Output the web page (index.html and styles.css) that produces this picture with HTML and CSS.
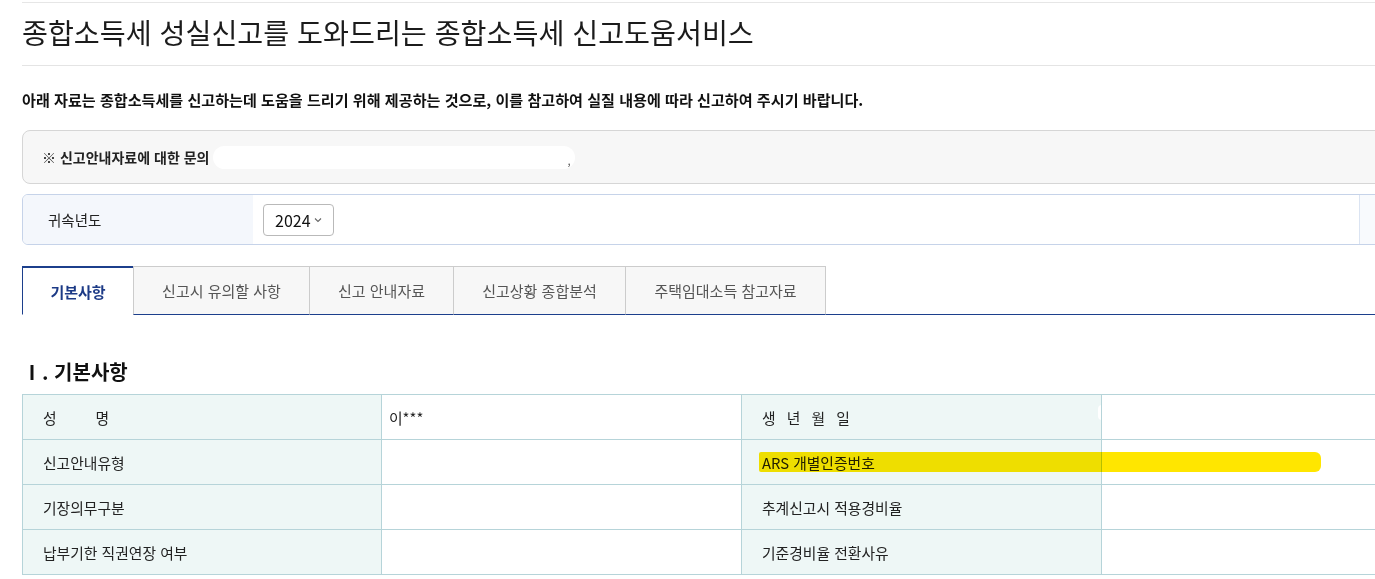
FILE: index.html
```html
<!DOCTYPE html>
<html lang="ko">
<head>
  <meta charset="UTF-8" />
  <title>종합소득세 신고도움서비스</title>
  <link rel="stylesheet" href="styles.css">
</head>
<body>
  <div class="page">
    <div class="top-line"></div>
    <h1 class="title">종합소득세 성실신고를 도와드리는 종합소득세 신고도움서비스</h1>
    <p class="notice">아래 자료는 종합소득세를 신고하는데 도움을 드리기 위해 제공하는 것으로, 이를 참고하여 실질 내용에 따라 신고하여 주시기 바랍니다.</p>

    <div class="info-box">
      <span>※ 신고안내자료에 대한 문의</span>
      <span class="blank"></span>
      <span class="comma">,</span>
    </div>

    <div class="year-box">
      <div class="year-label">귀속년도</div>
      <div class="year-value">
        <div class="select">
          <span>2024</span>
          <svg width="8" height="6" viewBox="0 0 8 6"><path d="M1 1.5 L4 4.5 L7 1.5" fill="none" stroke="#666" stroke-width="1.1"/></svg>
        </div>
      </div>
      <div class="year-rest"></div>
    </div>

    <div class="tabs">
      <div class="tab active">기본사항</div>
      <div class="tab w2">신고시 유의할 사항</div>
      <div class="tab w3">신고 안내자료</div>
      <div class="tab w4">신고상황 종합분석</div>
      <div class="tab w5">주택임대소득 참고자료</div>
      <div class="tab-fill"></div>
    </div>

    <h2 class="section-title">Ⅰ. 기본사항</h2>

    <table class="info-table">
      <colgroup>
        <col class="c1"><col class="c2"><col class="c3"><col>
      </colgroup>
      <tr>
        <th><span class="spread"><span>성</span><span>명</span></span></th>
        <td class="name">이***</td>
        <th class="wide">생 년 월 일</th>
        <td><span class="smudge"></span></td>
      </tr>
      <tr>
        <th>신고안내유형</th>
        <td></td>
        <th class="mark-cell">ARS 개별인증번호<span class="marker"></span></th>
        <td></td>
      </tr>
      <tr>
        <th>기장의무구분</th>
        <td></td>
        <th>추계신고시 적용경비율</th>
        <td></td>
      </tr>
      <tr>
        <th>납부기한 직권연장 여부</th>
        <td></td>
        <th>기준경비율 전환사유</th>
        <td></td>
      </tr>
    </table>
  </div>
</body>
</html>
```

FILE: styles.css
```css
body {
  margin: 0;
  font-family: "Noto Sans CJK KR", "Noto Sans", sans-serif;
  color: #222;
  background-color: #fff;
  overflow: hidden;
}

.page {
  width: 1420px;
  padding-left: 22px;
}

.top-line {
  margin-top: 2px;
  border-top: 1px solid #e6e6e6;
}

.title {
  margin: 0;
  height: 62px;
  line-height: 57px;
  font-size: 28.2px;
  font-weight: 400;
  color: #1b1b1b;
  border-bottom: 1px solid #e4e4e4;
}

.notice {
  margin: 22px 0 0;
  line-height: 22px;
  font-size: 15.1px;
  font-weight: 700;
  color: #111;
}

.info-box {
  margin-top: 20px;
  height: 52px;
  display: flex;
  align-items: center;
  padding-left: 19px;
  background-color: #f7f7f7;
  border: 1px solid #d6d6d6;
  border-radius: 8px;
  font-size: 14px;
  font-weight: 700;
}

.blank {
  display: inline-block;
  width: 362px;
  height: 23px;
  margin-left: 4px;
  background-color: #fff;
  border-radius: 12px;
}

.comma {
  margin-left: -8px;
  margin-top: 6px;
  font-weight: 400;
  font-size: 11px;
  color: #555;
}

.year-box {
  margin-top: 10px;
  height: 49px;
  display: flex;
  border: 1px solid #c6d3e9;
  border-radius: 6px;
  overflow: hidden;
}

.year-label {
  width: 205px;
  padding-left: 25px;
  display: flex;
  align-items: center;
  background-color: #f4f7fc;
  font-size: 14.5px;
}

.year-value {
  width: 1096px;
  padding-left: 10px;
  display: flex;
  align-items: center;
  border-right: 1px solid #dbe4f2;
}

.year-rest {
  flex: 1;
  background-color: #f8fafd;
}

.select {
  width: 71px;
  height: 32px;
  display: flex;
  align-items: center;
  gap: 3px;
  padding-left: 11px;
  box-sizing: border-box;
  border: 1px solid #b9b9b9;
  border-radius: 4px;
  font-size: 16px;
  color: #111;
}

.tabs {
  margin-top: 21px;
  display: flex;
  height: 49px;
}

.tab {
  box-sizing: border-box;
  display: flex;
  align-items: center;
  justify-content: center;
  font-size: 15px;
  color: #555;
  background-color: #f7f7f7;
  border: 1px solid #cccccc;
  border-left: none;
  border-bottom: 1px solid #1c3f8c;
}

.tab.active {
  width: 111px;
  background-color: #fff;
  color: #1c3a86;
  font-weight: 700;
  font-size: 15px;
  border: 1px solid #1c3f8c;
  border-top-width: 2px;
  border-right: none;
  border-bottom: 1px solid #fff;
}

.tab.w2 { width: 177px; border-left: 1px solid #cccccc; }
.tab.w3 { width: 144px; }
.tab.w4 { width: 172px; }
.tab.w5 { width: 200px; }

.tab-fill {
  flex: 1;
  border-bottom: 1px solid #1c3f8c;
}

.section-title {
  margin: 40px 0 0;
  height: 34px;
  line-height: 34px;
  font-size: 20px;
  font-weight: 700;
  color: #111;
}

.info-table {
  margin-top: 5px;
  width: 1400px;
  border-collapse: collapse;
  table-layout: fixed;
  font-size: 14.8px;
}

.info-table .c1 { width: 359px; }
.info-table .c2 { width: 360px; }
.info-table .c3 { width: 360px; }

.info-table th,
.info-table td {
  height: 44px;
  border: 1px solid #b6d4d9;
  padding: 0 0 0 20px;
  text-align: left;
  vertical-align: middle;
}

.info-table th {
  background-color: #eef7f6;
  font-weight: 400;
  color: #222;
}

.info-table td {
  background-color: #fff;
}

.info-table td.name {
  padding-left: 7px;
}

.spread {
  display: inline-flex;
  justify-content: space-between;
  width: 66px;
}

.wide {
  letter-spacing: 3.5px;
}

.mark-cell {
  position: relative;
}

.marker {
  position: absolute;
  left: 17px;
  top: 12px;
  width: 562px;
  height: 20px;
  background-color: #ffe600;
  mix-blend-mode: multiply;
  border-radius: 2px 6px 6px 2px;
}

.smudge {
  display: block;
  margin-left: -24px;
  width: 8px;
  height: 15px;
  margin-top: -10px;
  background-color: #fff;
  border-radius: 5px;
}
```
